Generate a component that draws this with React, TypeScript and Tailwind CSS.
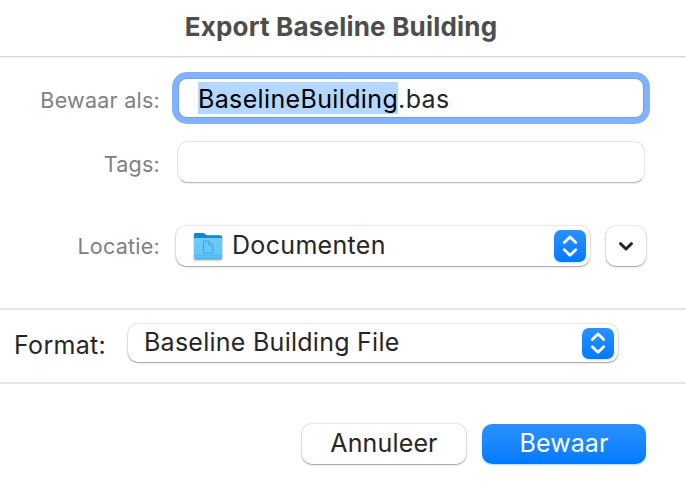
import React from 'react';

const UpDownBadge: React.FC<{ className?: string }> = ({ className = 'h-8' }) => (
  <span
    className={`flex w-8 items-center justify-center rounded-[7px] bg-gradient-to-b from-[#2a90ff] to-[#007aff] shadow-[0_1px_2px_rgba(0,122,255,0.25)] ${className}`}
  >
    <svg width="16" height="24" viewBox="0 0 16 24" fill="none" stroke="white" strokeWidth="2.8" strokeLinecap="round" strokeLinejoin="round">
      <path d="M2.3 8.5 8 2.9l5.7 5.6" />
      <path d="M2.3 15.7 8 21.3l5.7-5.6" />
    </svg>
  </span>
);

const DocumentsFolder: React.FC = () => (
  <svg width="32" height="30" viewBox="0 0 32 30" fill="none" className="drop-shadow-[0_1px_1px_rgba(0,0,0,0.3)]">
    <defs>
      <linearGradient id="folder-front" x1="0" y1="0" x2="0" y2="1">
        <stop offset="0" stopColor="#6ccdfb" />
        <stop offset="1" stopColor="#5cc2f5" />
      </linearGradient>
    </defs>
    <path d="M2 3.600C2 2.400 2.800 2 4 2h6.500c1 0 1.500.2 2.200.8l1 .8c.5.400 1 .6 1.800.6h12.700c1.200 0 1.900.7 1.900 1.900V12H2V3.600Z" fill="#1787c9" />
    <path d="M2 8.300c0-.8.5-1.200 1.300-1.200h25.500c.8 0 1.300.4 1.300 1.200v18.300c0 1-.6 1.600-1.600 1.600h-24.900c-1 0-1.600-.6-1.600-1.600V8.300Z" fill="url(#folder-front)" />
    <path d="M2 24.800h28.100" stroke="#43aee5" strokeWidth="0.800" />
    <path d="M2.600 27.800h27" stroke="#3b9fd3" strokeWidth="0.800" />
    <path d="M12.500 10h4.300l4 4v7.200c0 .6-.3 1-1 1h-7.300c-.7 0-1-.4-1-1V11c0-.6.3-1 1-1Z M16.800 10v4h4" stroke="#3ea3d8" strokeWidth="1" strokeLinejoin="round" />
  </svg>
);

const App: React.FC = () => {
  return (
    <main className="flex h-[504px] w-[686px] flex-col overflow-hidden bg-white font-['Inter',sans-serif] text-[25px] leading-[30px] tracking-[0.32px] text-[#262626]">
      <header className="flex h-[57px] shrink-0 justify-center border-b border-[#d6d6d6] pr-1 pt-3 shadow-[0_1px_0_#f0f0f0]">
        <h1 className="whitespace-nowrap text-[26px] font-bold tracking-[0.2px] text-[#4d4d4d]">Export Baseline Building</h1>
      </header>

      <section className="h-[253px] shrink-0 border-b-2 border-[#e5e5e5] pt-[15px]">
        <div className="flex h-[52px] items-center">
          <label className="w-[160px] shrink-0 pt-1 text-right text-[21.5px] tracking-[0.25px] text-[#808080]">Bewaar als:</label>
          <div className="ml-3 flex h-[52px] w-[478px] items-center rounded-[15px] border-[6px] border-[#81b2fb] bg-[#6fa0e9] p-px">
            <div className="flex h-full w-full items-center rounded-[8px] bg-white pl-[19px] tracking-[0.36px]">
              <span className="flex h-8 items-center bg-[#b3d7ff] pt-0.5 text-black">BaselineBuilding</span>
              <span className="pt-0.5">.bas</span>
            </div>
          </div>
        </div>

        <div className="mt-[17px] flex h-[42px] items-center">
          <label className="w-[160px] shrink-0 pt-1 text-right text-[21.5px] tracking-[0.25px] text-[#808080]">Tags:</label>
          <div className="ml-[17px] h-[42px] w-[468px] rounded-[11px] border border-[#e6e6e6] border-b-[#bcbcbc] bg-white shadow-[0_1px_0_rgba(0,0,0,0.08)]" />
        </div>

        <div className="mt-[42px] flex h-[42px] items-center">
          <label className="w-[160px] shrink-0 text-right text-[21.5px] tracking-[0.25px] text-[#808080]">Locatie:</label>
          <button className="ml-4 flex h-[40px] w-[414px] items-center rounded-[10px] bg-white pl-4 pr-[4px] shadow-[0_0_1px_1px_rgba(0,0,0,0.08),0_1px_1px_rgba(0,0,0,0.22),0_1px_3px_rgba(0,0,0,0.12)]">
            <DocumentsFolder />
            <span className="ml-2 flex-1 pb-0.5 text-left">Documenten</span>
            <UpDownBadge />
          </button>
          <button className="ml-4 flex h-[40px] w-10 items-center justify-center rounded-[10px] bg-white shadow-[0_0_1px_1px_rgba(0,0,0,0.08),0_1px_1px_rgba(0,0,0,0.22),0_1px_3px_rgba(0,0,0,0.12)]">
            <svg width="16" height="12" viewBox="0 0 16 12" fill="none" stroke="#262626" strokeWidth="3" strokeLinecap="round" strokeLinejoin="round">
              <path d="M2.500 3.700 8 9l5.500-5.300" />
            </svg>
          </button>
        </div>
      </section>

      <section className="flex h-[74px] shrink-0 border-b-2 border-[#e5e5e5] pt-[14px]">
        <span className="ml-3.5 w-[114px] shrink-0 pt-[6px]">Format:</span>
        <button className="flex h-[38px] w-[490px] items-center rounded-[10px] bg-white pl-4 pr-[4px] shadow-[0_0_1px_1px_rgba(0,0,0,0.08),0_1px_1px_rgba(0,0,0,0.22),0_1px_3px_rgba(0,0,0,0.12)]">
          <span className="flex-1 pb-0.5 text-left tracking-[0.26px]">Baseline Building File</span>
          <UpDownBadge className="h-[31px]" />
        </button>
      </section>

      <footer className="flex justify-end gap-4 pr-10 pt-10">
        <button className="h-[40px] w-[164px] rounded-[10px] bg-white pb-0.5 tracking-[0.15px] shadow-[0_0_1px_1px_rgba(0,0,0,0.08),0_1px_1px_rgba(0,0,0,0.22),0_1px_3px_rgba(0,0,0,0.12)]">
          Annuleer
        </button>
        <button className="h-[40px] w-[164px] rounded-[10px] bg-gradient-to-b from-[#2a90ff] to-[#007aff] pb-0.5 tracking-[0.1px] text-white shadow-[0_1px_2px_rgba(0,122,255,0.3)]">
          Bewaar
        </button>
      </footer>
    </main>
  );
};

export default App;
